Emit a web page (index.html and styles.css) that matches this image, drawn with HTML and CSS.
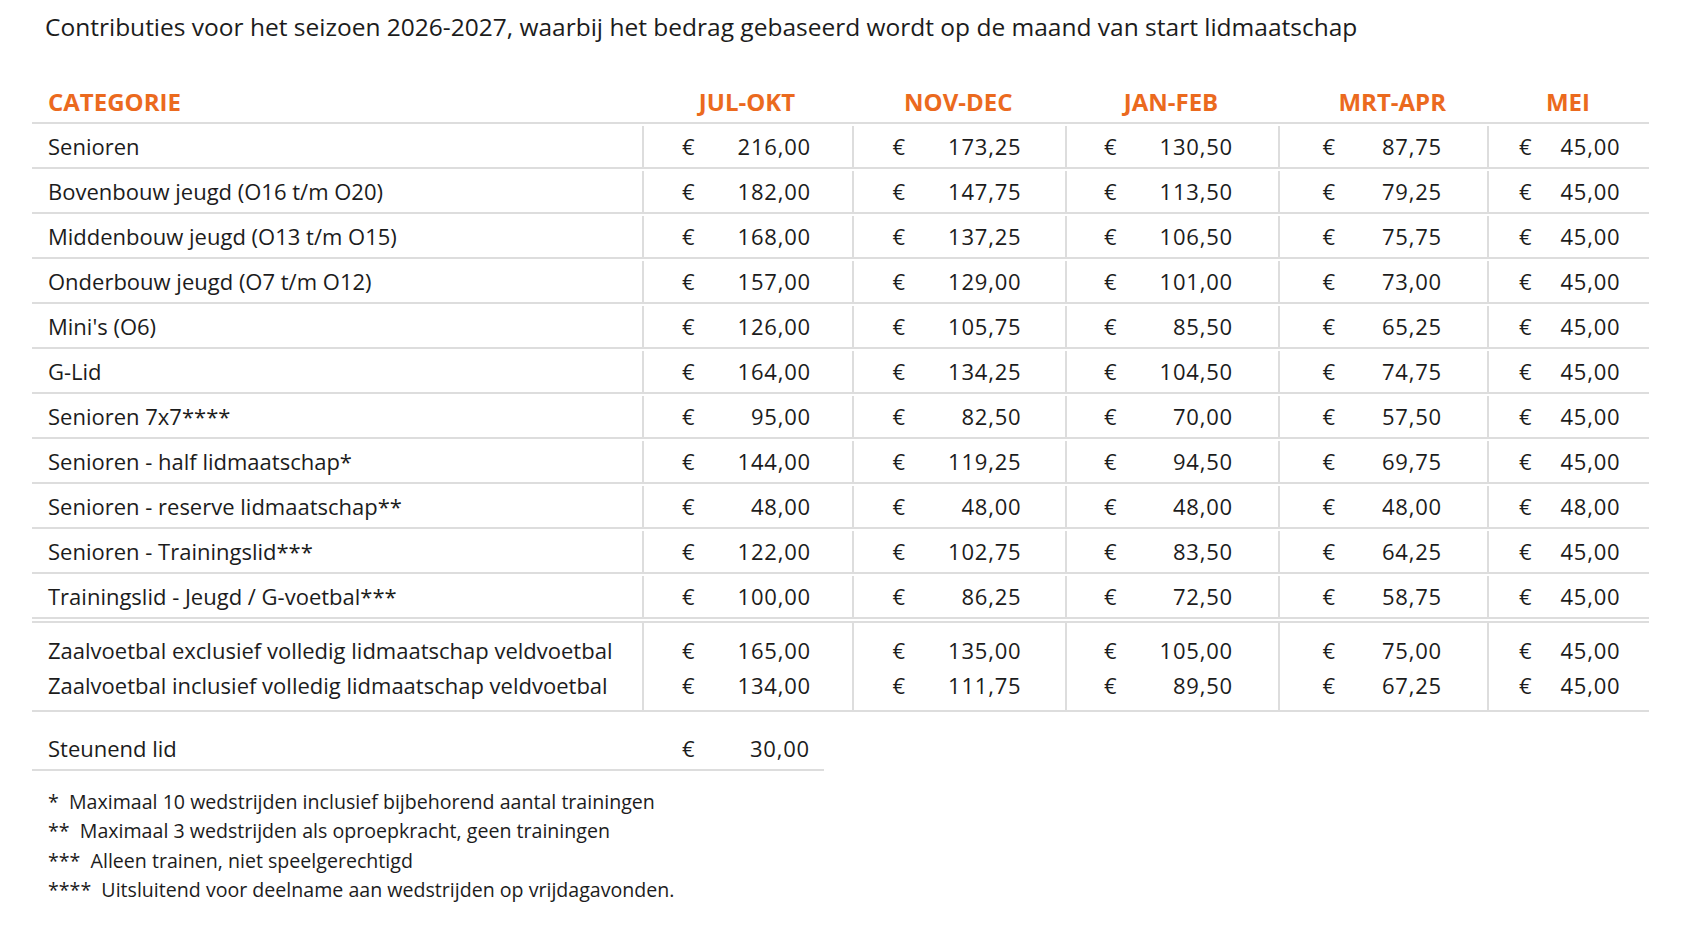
FILE: index.html
```html
<!DOCTYPE html>
<html lang="nl">
<head>
<meta charset="utf-8">
<title>Contributies 2026-2027</title>
<link rel="stylesheet" href="styles.css">
</head>
<body>
<main class="page">
  <h1 class="title">Contributies voor het seizoen 2026-2027, waarbij het bedrag gebaseerd wordt op de maand van start lidmaatschap</h1>

  <div class="fees">
    <div class="row head">
      <div class="cat">CATEGORIE</div>
      <div class="hd">JUL-OKT</div>
      <div class="hd">NOV-DEC</div>
      <div class="hd">JAN-FEB</div>
      <div class="hd hd-mrt">MRT-APR</div>
      <div class="hd">MEI</div>
    </div>

    <div class="section main">
      <div class="row"><div class="cat">Senioren</div><div class="amt"><span>€</span><span>216,00</span></div><div class="amt"><span>€</span><span>173,25</span></div><div class="amt"><span>€</span><span>130,50</span></div><div class="amt"><span>€</span><span>87,75</span></div><div class="amt"><span>€</span><span>45,00</span></div></div>
      <div class="row"><div class="cat">Bovenbouw jeugd (O16 t/m O20)</div><div class="amt"><span>€</span><span>182,00</span></div><div class="amt"><span>€</span><span>147,75</span></div><div class="amt"><span>€</span><span>113,50</span></div><div class="amt"><span>€</span><span>79,25</span></div><div class="amt"><span>€</span><span>45,00</span></div></div>
      <div class="row"><div class="cat">Middenbouw jeugd (O13 t/m O15)</div><div class="amt"><span>€</span><span>168,00</span></div><div class="amt"><span>€</span><span>137,25</span></div><div class="amt"><span>€</span><span>106,50</span></div><div class="amt"><span>€</span><span>75,75</span></div><div class="amt"><span>€</span><span>45,00</span></div></div>
      <div class="row"><div class="cat">Onderbouw jeugd (O7 t/m O12)</div><div class="amt"><span>€</span><span>157,00</span></div><div class="amt"><span>€</span><span>129,00</span></div><div class="amt"><span>€</span><span>101,00</span></div><div class="amt"><span>€</span><span>73,00</span></div><div class="amt"><span>€</span><span>45,00</span></div></div>
      <div class="row"><div class="cat">Mini's (O6)</div><div class="amt"><span>€</span><span>126,00</span></div><div class="amt"><span>€</span><span>105,75</span></div><div class="amt"><span>€</span><span>85,50</span></div><div class="amt"><span>€</span><span>65,25</span></div><div class="amt"><span>€</span><span>45,00</span></div></div>
      <div class="row"><div class="cat">G-Lid</div><div class="amt"><span>€</span><span>164,00</span></div><div class="amt"><span>€</span><span>134,25</span></div><div class="amt"><span>€</span><span>104,50</span></div><div class="amt"><span>€</span><span>74,75</span></div><div class="amt"><span>€</span><span>45,00</span></div></div>
      <div class="row"><div class="cat">Senioren 7x7****</div><div class="amt"><span>€</span><span>95,00</span></div><div class="amt"><span>€</span><span>82,50</span></div><div class="amt"><span>€</span><span>70,00</span></div><div class="amt"><span>€</span><span>57,50</span></div><div class="amt"><span>€</span><span>45,00</span></div></div>
      <div class="row"><div class="cat">Senioren - half lidmaatschap*</div><div class="amt"><span>€</span><span>144,00</span></div><div class="amt"><span>€</span><span>119,25</span></div><div class="amt"><span>€</span><span>94,50</span></div><div class="amt"><span>€</span><span>69,75</span></div><div class="amt"><span>€</span><span>45,00</span></div></div>
      <div class="row"><div class="cat">Senioren - reserve lidmaatschap**</div><div class="amt"><span>€</span><span>48,00</span></div><div class="amt"><span>€</span><span>48,00</span></div><div class="amt"><span>€</span><span>48,00</span></div><div class="amt"><span>€</span><span>48,00</span></div><div class="amt"><span>€</span><span>48,00</span></div></div>
      <div class="row"><div class="cat">Senioren - Trainingslid***</div><div class="amt"><span>€</span><span>122,00</span></div><div class="amt"><span>€</span><span>102,75</span></div><div class="amt"><span>€</span><span>83,50</span></div><div class="amt"><span>€</span><span>64,25</span></div><div class="amt"><span>€</span><span>45,00</span></div></div>
      <div class="row"><div class="cat">Trainingslid - Jeugd / G-voetbal***</div><div class="amt"><span>€</span><span>100,00</span></div><div class="amt"><span>€</span><span>86,25</span></div><div class="amt"><span>€</span><span>72,50</span></div><div class="amt"><span>€</span><span>58,75</span></div><div class="amt"><span>€</span><span>45,00</span></div></div>
    </div>

    <div class="section zaal">
      <div class="row"><div class="cat">Zaalvoetbal exclusief volledig lidmaatschap veldvoetbal</div><div class="amt"><span>€</span><span>165,00</span></div><div class="amt"><span>€</span><span>135,00</span></div><div class="amt"><span>€</span><span>105,00</span></div><div class="amt"><span>€</span><span>75,00</span></div><div class="amt"><span>€</span><span>45,00</span></div></div>
      <div class="row"><div class="cat">Zaalvoetbal inclusief volledig lidmaatschap veldvoetbal</div><div class="amt"><span>€</span><span>134,00</span></div><div class="amt"><span>€</span><span>111,75</span></div><div class="amt"><span>€</span><span>89,50</span></div><div class="amt"><span>€</span><span>67,25</span></div><div class="amt"><span>€</span><span>45,00</span></div></div>
    </div>
  </div>

  <div class="steun">
    <div class="cat">Steunend lid</div>
    <div class="amt"><span>€</span><span>30,00</span></div>
  </div>

  <ul class="notes">
    <li>*  Maximaal 10 wedstrijden inclusief bijbehorend aantal trainingen</li>
    <li>**  Maximaal 3 wedstrijden als oproepkracht, geen trainingen</li>
    <li>***  Alleen trainen, niet speelgerechtigd</li>
    <li>****  Uitsluitend voor deelname aan wedstrijden op vrijdagavonden.</li>
  </ul>
</main>
</body>
</html>
```

FILE: styles.css
```css
html, body {
  margin: 0;
  padding: 0;
  background: #ffffff;
}

body {
  font-family: "Open Sans", "Noto Sans", sans-serif;
  color: #1c1c1c;
}

.page {
  padding: 10px 0 0 32px;
}

.title {
  margin: 0 0 34px 13px;
  font-size: 24.5px;
  font-weight: 400;
  line-height: 34px;
}

.fees {
  width: 1617px;
}

.row,
.steun {
  display: grid;
  grid-template-columns: 610px 210px 212.5px 213px 209.5px 162px;
  font-size: 22px;
}

.row .cat,
.steun .cat {
  padding-left: 16px;
  white-space: nowrap;
}

.head {
  height: 46px;
  align-items: center;
  border-bottom: 2px solid #dddddd;
  color: #eb6a1e;
  font-weight: 700;
  font-size: 24px;
  padding-top: 3px;
  box-sizing: border-box;
}

.head .hd {
  text-align: center;
}

.head .hd-mrt {
  padding-left: 20px;
}

.section.main .row {
  height: 45px;
  padding-top: 2px;
  line-height: 41px;
  border-bottom: 2px solid #dddddd;
  box-sizing: border-box;
}

.amt {
  display: flex;
  justify-content: space-between;
  border-left: 2px solid #dddddd;
  box-sizing: border-box;
  letter-spacing: 0.8px;
}

.row .amt:nth-child(2) { padding: 0 41px 0 38px; }
.row .amt:nth-child(3) { padding: 0 43px 0 38.5px; }
.row .amt:nth-child(4) { padding: 0 44.5px 0 37.5px; }
.row .amt:nth-child(5) { padding: 0 45px 0 43px; }
.row .amt:nth-child(6) { padding: 0 28.5px 0 30px; }

.section.zaal {
  margin-top: 2px;
  border-top: 2px solid #dddddd;
  border-bottom: 2px solid #dddddd;
}

.section.zaal .row {
  line-height: 35px;
}

.section.zaal .row:first-child > div {
  padding-top: 10px;
}

.section.zaal .row:last-child > div {
  padding-bottom: 7px;
}

.steun {
  grid-template-columns: 610px 182px;
  width: 792px;
  margin-top: 14px;
  height: 45px;
  padding-top: 2px;
  line-height: 41px;
  border-bottom: 2px solid #dddddd;
  box-sizing: border-box;
}

.steun .amt {
  border-left: 0;
  padding: 0 14px 0 40px;
}

.notes {
  list-style: none;
  margin: 16px 0 0 0;
  padding: 0 0 0 16px;
  font-size: 19.6px;
  line-height: 29.4px;
}

.notes li {
  white-space: pre;
}
```
